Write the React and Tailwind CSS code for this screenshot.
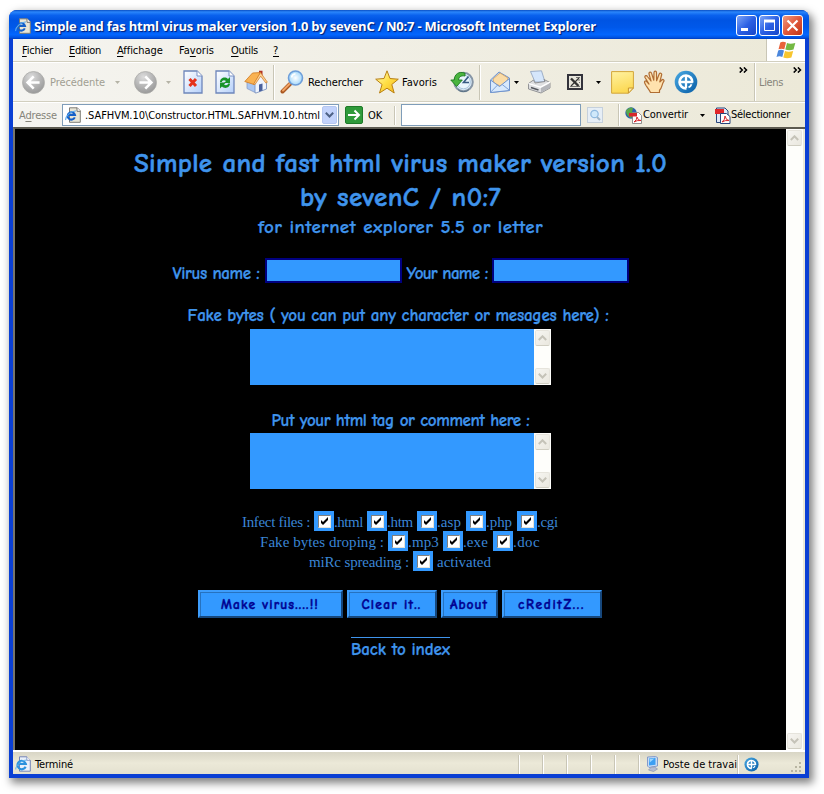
import { useLayoutEffect, useRef } from "react";

// Text run that tracks its letters so that it spans exactly `w` pixels.
function Fit({ w, className = "", children }) {
  const box = useRef(null);
  const run = useRef(null);
  useLayoutEffect(() => {
    const el = run.current;
    el.style.letterSpacing = "0px";
    const n = el.textContent.length;
    const gap = (w - el.getBoundingClientRect().width) / n;
    el.style.letterSpacing = gap + "px";
    box.current.style.width = w + "px";
  }, [w]);
  return (
    <span ref={box} className={"inline-block shrink-0 whitespace-pre " + className}>
      <span ref={run} className="inline-block">{children}</span>
    </span>
  );
}

const U = ({ children }) => <span className="underline underline-offset-2 decoration-1">{children}</span>;

const Caret = ({ className = "" }) => (
  <svg viewBox="0 0 5 3" className={"h-[3px] w-[5px] shrink-0 " + className} fill="currentColor"><path d="M0 0h5L2.5 3z" /></svg>
);

const Sep = ({ className = "" }) => <div className={"w-[2px] shrink-0 border-l border-[#c9c6b6] border-r border-r-white " + className} />;

const PageE = ({ className = "" }) => (
  <svg viewBox="0 0 16 16" className={"h-4 w-4 shrink-0 " + className}>
    <path d="M4.5.8h7.8l3 3v11.5H4.5z" fill="#e9e6d6" stroke="#7e7d77" />
    <path d="M12 .8v3.500h3.300" fill="#fff" stroke="#555" strokeWidth=".8" />
    <path d="M9.800 10.400A3.700 3.700 0 1 1 10 8H3.500" fill="none" stroke="#1560c8" strokeWidth="2" />
    <path d="M.8 13C0 10 6 3.500 11 4" fill="none" stroke="#57a8ee" strokeWidth="1.100" />
  </svg>
);

const NavCircle = ({ flip, className = "" }) => (
  <svg viewBox="0 0 22 22" className={"h-[23px] w-[23px] shrink-0 " + className}>
    <defs>
      <radialGradient id="nav" cx=".4" cy=".25" r=".8"><stop stopColor="#dcdcdc" /><stop offset=".5" stopColor="#b8b8b8" /><stop offset="1" stopColor="#969696" /></radialGradient>
    </defs>
    <circle cx="11" cy="11" r="10.500" fill="url(#nav)" stroke="#a8a8a6" strokeWidth=".7" />
    <g transform={flip ? "translate(22 0) scale(-1 1)" : undefined}>
      <path d="M11.200 5.200L5.400 11l5.800 5.800M5.800 11h11" fill="none" stroke="#fff" strokeWidth="2.500" />
    </g>
  </svg>
);

const Sheet = ({ children, className = "" }) => (
  <svg viewBox="0 0 20 24" className={"h-6 w-5 shrink-0 " + className}>
    <defs><linearGradient id="sheet" x2="1" y2="1"><stop stopColor="#fff" /><stop offset="1" stopColor="#b5d0fa" /></linearGradient></defs>
    <path d="M1 1h13l5 5v17H1z" fill="url(#sheet)" stroke="#6e86bb" strokeWidth="1.300" />
    <path d="M14 1v5h5" fill="#fff" stroke="#7d93c4" />
    {children}
  </svg>
);

const Home = ({ className = "" }) => (
  <svg viewBox="0 0 24 24" className={"h-6 w-6 shrink-0 " + className}>
    <path d="M15 .8h3.500V8L15 5z" fill="#b23325" />
    <path d="M3 11l9 1v11L3 18.500z" fill="#a9c6f2" stroke="#8297c0" strokeWidth=".7" />
    <path d="M11 22.500V12.500L17 4.500l5.500 7.500v7L12 23z" fill="#eff4fd" stroke="#7e94bf" strokeWidth=".9" />
    <path d="M15 14.500l3.500-1v7L15 21.700z" fill="#49609c" />
    <path d="M8.500 3L16.500 2.500 10 14.500.8 11.500z" fill="#f9b252" stroke="#cf7920" strokeWidth=".8" />
    <path d="M16.500 2.500l6.900 9.700-1.600.8-5.100-6.800-5.700 8.300-1.500-.3z" fill="#fdd194" stroke="#cf7920" strokeWidth=".7" />
  </svg>
);

const Search = ({ className = "" }) => (
  <svg viewBox="0 0 24 24" className={"h-6 w-6 shrink-0 " + className}>
    <defs><radialGradient id="lens"><stop stopColor="#fff" /><stop offset="1" stopColor="#a3d8fb" /></radialGradient></defs>
    <path d="M10 14l-7.500 7.500" stroke="#a95720" strokeWidth="4" strokeLinecap="round" />
    <path d="M9.500 14l-6.500 6.500" stroke="#f2a263" strokeWidth="2" strokeLinecap="round" />
    <circle cx="15.500" cy="8" r="7" fill="url(#lens)" stroke="#6e9ed9" strokeWidth="1.600" />
    <path d="M11.500 7.500a4.500 4.500 0 0 1 4-3.700" fill="none" stroke="#fff" strokeWidth="1.500" />
  </svg>
);

const Star = ({ className = "" }) => (
  <svg viewBox="0 0 24 24" className={"h-6 w-6 shrink-0 " + className}>
    <defs><linearGradient id="star" x2="1" y2="1"><stop stopColor="#fffbc0" /><stop offset=".5" stopColor="#ffdf45" /><stop offset="1" stopColor="#f5b319" /></linearGradient></defs>
    <path d="M12 .8l3 7.700 8.300.7-6.500 5.300 2.400 8.500L12 18.200 4.500 23l2.600-8.500L.7 9.200 9 8.500z" fill="url(#star)" stroke="#b98014" strokeLinejoin="round" />
  </svg>
);

const History = ({ className = "" }) => (
  <svg viewBox="0 0 24 24" className={"h-6 w-6 shrink-0 " + className}>
    <circle cx="13.500" cy="12" r="9.300" fill="#dcecf9" stroke="#8796a6" strokeWidth="2" />
    <circle cx="13.500" cy="12" r="6.800" fill="#e9f5fd" stroke="#abc5dc" />
    <path d="M18.500 6.500L13.500 12.500h5.500" fill="none" stroke="#375a83" strokeWidth="1.600" />
    <path d="M15 3.200C9 .8 4.500 4 4.200 10H.8l5.800 6.500 5.700-6.500H8.600c0-2.700 2-4.800 6.400-4z" fill="#4ab43e" stroke="#1d7b20" strokeWidth=".9" />
    <path d="M8 19.500c3 3 8 2.600 11 0" fill="none" stroke="#5b7285" strokeWidth="1" />
  </svg>
);

const Mail = ({ className = "" }) => (
  <svg viewBox="0 0 22 24" className={"h-6 w-[22px] shrink-0 " + className}>
    <path d="M1.500 10L10 2l10.500 6v12.500L1.500 22.500z" fill="#bcd7f9" stroke="#6f93cc" />
    <path d="M4 9l7-6 8 5-1.500 5L11 16l-6-3z" fill="#fbdca6" stroke="#d2a161" strokeWidth=".8" />
    <path d="M1.500 10l9 6.500 10-8v12l-19 2z" fill="#d8e9fd" stroke="#6f93cc" />
    <path d="M1.800 22l7-7.200M20.200 20l-7-5.500" stroke="#7da1d8" />
  </svg>
);

const Printer = ({ className = "" }) => (
  <svg viewBox="0 0 24 24" className={"h-6 w-6 shrink-0 " + className}>
    <path d="M3.500 1.500L14.500.8 18 12H8z" fill="#d5e6fb" stroke="#8d9fbd" strokeWidth=".8" />
    <path d="M1.500 13.500l5-3.500 1.500 3 10-1.500-1-2 6 3v5.500l-9 5-12.500-4z" fill="#dedfe1" stroke="#7d7f83" strokeWidth=".8" />
    <path d="M1.500 13.500l12 3.700 9.500-5" fill="none" stroke="#fff" strokeWidth="1.300" />
    <path d="M14 18v4.500l8.500-4.500v-4.500z" fill="#b4b6bb" />
    <path d="M4 17.500l7.500 2.500" stroke="#55585e" strokeWidth="1.400" />
  </svg>
);

const Excel = ({ className = "" }) => (
  <svg viewBox="0 0 16 16" className={"h-4 w-4 shrink-0 " + className}>
    <path d="M1 1h14v14H1z" fill="#e8e6dc" stroke="#33333b" strokeWidth="2" />
    <path d="M4 4.500l7.500 7.500" stroke="#333" strokeWidth="2.400" />
    <path d="M12 4L4 12" stroke="#333" strokeWidth="1.100" />
    <path d="M9 3.500h4M11 6h2M12 8.500h1M3 12.500h10" stroke="#555" strokeWidth=".8" />
  </svg>
);

const Note = ({ className = "" }) => (
  <svg viewBox="0 0 23 23" className={"h-[23px] w-[23px] shrink-0 " + className}>
    <defs><linearGradient id="note" y2="1" x2=".3"><stop stopColor="#fff2a2" /><stop offset="1" stopColor="#fcd954" /></linearGradient></defs>
    <path d="M.6.6h21.800V17l-5 5.200H.6z" fill="url(#note)" stroke="#d3a63a" />
    <path d="M17.400 22.200V17h5z" fill="#ffeeb0" stroke="#c79630" />
  </svg>
);

const Hand = ({ className = "" }) => (
  <svg viewBox="0 0 22 24" className={"h-6 w-[22px] shrink-0 " + className}>
    <path d="M7.500 22.500c-1-2.500-2.500-4-4.500-7C1.500 13 1 11.500 2.200 11c1.300-.4 2.300 1.500 3.800 3L2 7.500C1.400 5.600 3.600 4.800 4.400 6.500L8 11 6 4C5.600 2 8 1.300 8.600 3.400l2.200 6.800.2-7.700c.2-1.900 2.500-1.800 2.500.2l.1 8 2.600-6.700c.8-1.700 2.900-.8 2.400 1L16.800 12l2-2c1.300-1.200 2.900.2 1.800 1.700-2 2.800-1.400 6.300-4.100 8.500v2.300z" fill="#ffe2ae" stroke="#b06d33" strokeWidth="1.200" strokeLinejoin="round" />
  </svg>
);

const Target = ({ className = "h-6 w-6" }) => (
  <svg viewBox="0 0 24 24" className={"shrink-0 " + className}>
    <defs><linearGradient id="tgt" y2="1"><stop stopColor="#4aa9e2" /><stop offset="1" stopColor="#075da6" /></linearGradient></defs>
    <circle cx="12" cy="12" r="11.300" fill="url(#tgt)" />
    <path d="M18.300 12.500A6.400 6.400 0 1 0 12.500 18.300" fill="none" stroke="#fff" strokeWidth="2.600" />
    <path d="M12 6v12M6 12h12.800" stroke="#fff" strokeWidth="2.300" />
    <path d="M14.500 17.300q2.400-.8 3-3" fill="none" stroke="#fff" strokeWidth="1.800" />
  </svg>
);

const Chevrons = ({ className = "" }) => (
  <svg viewBox="0 0 9 6" className={"h-[6px] w-[9px] shrink-0 " + className} fill="none" stroke="#000" strokeWidth="1.500"><path d="M.7.4L3.300 3 .7 5.600M4.900.4L7.500 3 4.900 5.600" /></svg>
);

const Flag = () => (
  <svg viewBox="0 0 20 18" className="h-[18px] w-5">
    <path d="M4.300 1.500Q7 .2 10 1.600L8.300 8.300Q5.500 7 2.500 8.300z" fill="#e8623a" />
    <path d="M11 2Q14 3.600 19.300 2L17.500 8.600Q13 10 9.300 8.600z" fill="#74b943" />
    <path d="M2.200 9.500Q5 8.200 8 9.500L6.300 16Q3.500 14.700.5 16z" fill="#4a86dc" />
    <path d="M9 9.900Q12.500 11.400 17.200 9.900L15.400 16.400Q11 18 7.300 16.400z" fill="#f7c52e" />
  </svg>
);

const Pdf = ({ globe, className = "" }) => (
  <svg viewBox="0 0 17 17" className={"h-[17px] w-[17px] shrink-0 " + className}>
    {globe ? (
      <>
        <circle cx="6" cy="6" r="5.700" fill="#2b62ac" />
        <path d="M1 3.500Q5-1 8 1L7 5l3 2-4 4Q1 9 1 3.500z" fill="#5aa648" />
        <path d="M7.500 5.500h6l3 3v8h-9z" fill="#fff" stroke="#777" strokeWidth=".8" />
        <path d="M4 6h8v3.500H4z" fill="#d7282b" />
        <path d="M9 15q3-2 3-5 1 4 4 3.500-4-.5-7 1.500z" fill="none" stroke="#d7282b" />
      </>
    ) : (
      <>
        <path d="M2.500 1h8.500l3 3v11.500H2.500z" fill="#dfe8f6" stroke="#28467d" />
        <path d="M1 2h9v5H1z" fill="#e0262a" />
        <path d="M6.500 6.500h6l3.500 3v7H6.500z" fill="#fff" stroke="#28467d" />
        <path d="M8 15q3-2 3-6 1 4.500 4 4.500-4-.5-7 1.500z" fill="none" stroke="#d7282b" />
      </>
    )}
  </svg>
);

const StatusE = ({ className = "" }) => (
  <svg viewBox="0 0 16 16" className={"h-4 w-4 shrink-0 " + className}>
    <path d="M4.500.8h7.300l3.500 3.500v10.900H4.500z" fill="#eaf1fb" stroke="#7484b7" />
    <path d="M11.800.8v3.500h3.500" fill="#fff" stroke="#7484b7" strokeWidth=".8" />
    <path d="M10.600 10.700A4.200 4.200 0 1 1 10.800 8H3.500" fill="none" stroke="#2d92dd" strokeWidth="2.200" />
    <path d="M.8 13.500C0 10 7 3.500 11.700 4.200" fill="none" stroke="#5cb4f0" />
  </svg>
);

const Monitor = ({ className = "" }) => (
  <svg viewBox="0 0 14 16" className={"h-4 w-[14px] shrink-0 " + className}>
    <path d="M1.500 1l8-.5 2 1V10L3 11.500 1.500 10z" fill="#c8dcf5" stroke="#7b93c6" strokeWidth=".9" />
    <path d="M3 2.400l6.500-.6v7L3 9.600z" fill="#3d9ff2" />
    <path d="M3.500 3l5-.4-4.800 4z" fill="#9bd6ff" />
    <path d="M5.500 11h3l3 2-4 2.500-5-1.500z" fill="#b6bed2" stroke="#8b94ae" strokeWidth=".7" />
  </svg>
);

const ScrollBtn = ({ down }) => (
  <div className="flex h-[16px] w-full items-center justify-center rounded-[2px] border border-[#e6e4dc] border-b-[#d0cec2] bg-gradient-to-br from-[#f6f5f1] to-[#eae8df]">
    <svg viewBox="0 0 9 6" className="h-[6px] w-[9px]" fill="none" stroke="#c5c3b8" strokeWidth="2"><path d={down ? "M.8.8l3.700 3.700L8.200.8" : "M.8 5l3.700-3.700L8.200 5"} /></svg>
  </div>
);

const ScrollBar = () => (
  <div className="flex w-[17px] shrink-0 flex-col justify-between bg-[#fefefb] p-px">
    <ScrollBtn />
    <ScrollBtn down />
  </div>
);

const Area = ({ className = "" }) => (
  <div className={"flex h-[56px] w-[301px] bg-[#3399ff] " + className}>
    <div className="flex-1" />
    <ScrollBar />
  </div>
);

const Check = ({ className = "" }) => (
  <span className={"flex h-5 w-5 shrink-0 items-center justify-center bg-[#3399ff] " + className}>
    <span className="flex h-[13px] w-[13px] items-center justify-center border border-[#808080] border-r-[#e6e3d8] border-b-[#e6e3d8] bg-white">
      <svg viewBox="0 0 9 9" className="h-[9px] w-[9px]" fill="#000"><path d="M1 3v3l2 2 5-5V0L3 5z" /></svg>
    </span>
  </span>
);

const Btn = ({ w, className, children }) => (
  <div className={"flex h-7 items-center justify-center border-2 border-t-[#3d9dfc] border-l-[#3d9dfc] border-r-[#16477c] border-b-[#16477c] bg-[#3399ff] shadow-[inset_1px_1px_0_#2672bf] " + className}>
    <Fit w={w} className="mt-px text-[13.5px] font-bold leading-4 text-[#000090] [-webkit-text-stroke:0.4px_#000090]">{children}</Fit>
  </div>
);

const WinBtn = ({ red, children }) => (
  <div className={"flex h-[21px] w-[21px] items-center justify-center rounded-[3px] border border-white " + (red ? "bg-gradient-to-br from-[#f09a80] via-[#e0563a] to-[#bf3414]" : "bg-gradient-to-br from-[#7ea4f6] via-[#2c60e4] to-[#1845c8]")}>
    <svg viewBox="0 0 19 19" className="h-[19px] w-[19px]" fill="none" stroke="#fff">{children}</svg>
  </div>
);

const comic = "font-['Comic_Sans_MS','Comic_Neue',Lato,sans-serif] [-webkit-text-stroke:0.25px_currentColor]";

export default function App() {
  return (
    <div className="h-[794px] w-[824px] overflow-hidden bg-white pt-[10px] pl-[9px] font-['Tahoma','DejaVu_Sans_Condensed','Noto_Sans',sans-serif] text-[11px] leading-[14px] text-black">
      <div className="flex h-[768px] w-[800px] flex-col rounded-t-[8px] bg-[#0a3fd4] shadow-[3px_4px_9px_1px_rgba(0,0,0,0.5)]">
        <div className="flex h-[29px] shrink-0 items-center rounded-t-[8px] bg-[linear-gradient(180deg,#0a4fc4_0%,#2a86fb_7%,#0a62ee_18%,#0054e3_35%,#0058ea_60%,#0366fe_85%,#0055e5_94%,#003cc0_100%)] pt-[2px] pl-[6px]">
          <PageE />
          <Fit w={562} className="ml-[3px] font-['Trebuchet_MS','Open_Sans',sans-serif] text-[13px] font-bold leading-4 text-white [text-shadow:1px_1px_1px_#001a70]">Simple and fas html virus maker version 1.0 by sevenC / N0:7 - Microsoft Internet Explorer</Fit>
          <div className="ml-auto flex gap-[2px] pr-[6px]">
            <WinBtn><path d="M4 13.500h7" strokeWidth="3" /></WinBtn>
            <WinBtn><path d="M4.500 5.500h10v9h-10z" /><path d="M4 5h11" strokeWidth="3" /></WinBtn>
            <WinBtn red><path d="M4.500 4.500l10 10M14.500 4.500l-10 10" strokeWidth="2.200" /></WinBtn>
          </div>
        </div>

        <div className="mx-[4px] mb-[4px] flex min-h-0 flex-1 flex-col bg-[#ece9d8]">
          <div className="flex h-[23px] shrink-0 items-center border-b border-[#d2cfbf] bg-gradient-to-r from-[#f5f4f0] to-[#ece9d8] pl-[9px]">
            <Fit w={31} className="mt-px"><U>F</U>ichier</Fit>
            <Fit w={32} className="mt-px ml-[16px]"><U>E</U>dition</Fit>
            <Fit w={46} className="mt-px ml-[16px]"><U>A</U>ffichage</Fit>
            <Fit w={35} className="mt-px ml-[16px]">Fa<U>v</U>oris</Fit>
            <Fit w={27} className="mt-px ml-[17px]"><U>O</U>utils</Fit>
            <Fit w={6} className="mt-px ml-[15px]"><U>?</U></Fit>
            <div className="ml-auto flex h-[22px] w-[39px] items-center justify-center border-l border-[#c9c6b6] bg-white"><Flag /></div>
          </div>

          <div className="flex h-[40px] shrink-0 items-center border-t border-b border-t-white border-b-[#d2cfbf] bg-gradient-to-r from-[#f5f4f0] to-[#ece9d8] pl-[9px]">
            <NavCircle />
            <Fit w={55} className="mt-[2px] ml-[5px] text-[#a09e92]">Précédente</Fit>
            <Caret className="ml-[10px] text-[#b5b3a6]" />
            <NavCircle flip className="ml-[14px]" />
            <Caret className="ml-[9px] text-[#b5b3a6]" />
            <Sheet className="ml-[12px]"><path d="M6.500 9l6.500 7M13 9l-6.500 7" stroke="#e5331c" strokeWidth="3" /></Sheet>
            <Sheet className="ml-[12px]">
              <path d="M5 12c0-4 5-6 8-3l2-2v6H9l2-2c-2-1.500-4-.5-4 1z" fill="#189329" />
              <path d="M15 13.500c0 4-5 6-8 3l-2 2v-6h6l-2 2c2 1.500 4 .5 4-1z" fill="#189329" />
            </Sheet>
            <Home className="ml-[9px]" />
            <Sep className="ml-[5px] h-[35px]" />
            <Search className="ml-[5px]" />
            <Fit w={55} className="mt-[2px] ml-[4px]">Rechercher</Fit>
            <Star className="ml-[12px]" />
            <Fit w={35} className="mt-[2px] ml-[3px]">Favoris</Fit>
            <History className="ml-[13px]" />
            <Sep className="ml-[5px] h-[35px]" />
            <Mail className="ml-[8px]" />
            <Caret className="ml-[3px]" />
            <Printer className="ml-[8px]" />
            <Excel className="ml-[16px]" />
            <Caret className="ml-[13px]" />
            <Note className="ml-[10px]" />
            <Hand className="ml-[9px]" />
            <Target className="ml-[9px] h-[24px] w-[24px]" />
            <Chevrons className="-mt-[25px] ml-[41px]" />
            <Sep className="ml-[6px] h-[38px]" />
            <Fit w={24} className="mt-px ml-[3px] text-[#86847a]">Liens</Fit>
            <Chevrons className="-mt-[25px] ml-[10px]" />
          </div>

          <div className="flex h-[25px] shrink-0 items-center border-t border-white bg-gradient-to-r from-[#f5f4f0] to-[#ece9d8] pl-[6px]">
            <Fit w={38} className="mt-px text-[#86847a]">A<U>d</U>resse</Fit>
            <div className="ml-[5px] flex h-[22px] w-[277px] shrink-0 items-center border border-[#7f9db9] bg-white pl-[2px]">
              <PageE />
              <Fit w={235} className="mt-[2px] ml-[4px]">.SAFHVM.10\Constructor.HTML.SAFHVM.10.html</Fit>
              <div className="ml-[2px] flex h-[18px] w-[15px] items-center justify-center rounded-[2px] border border-[#b5c7f0] bg-[#c3d3fb]">
                <svg viewBox="0 0 9 6" className="h-[6px] w-[9px]" fill="none" stroke="#4d6185" strokeWidth="2"><path d="M.8.8l3.700 3.700L8.200.8" /></svg>
              </div>
            </div>
            <svg viewBox="0 0 18 18" className="ml-[6px] h-[18px] w-[18px] shrink-0">
              <rect x=".5" y=".5" width="17" height="17" rx="1.500" fill="#2f9a3a" stroke="#1e7a29" />
              <path d="M3 9h11M9.500 4.500L14 9l-4.500 4.500" fill="none" stroke="#fff" strokeWidth="2" />
            </svg>
            <Fit w={14} className="mt-px ml-[5px]">OK</Fit>
            <Sep className="ml-[12px] h-[19px]" />
            <div className="ml-[5px] h-[22px] w-[180px] shrink-0 border border-[#7f9db9] bg-white" />
            <div className="ml-[6px] flex h-4 w-4 shrink-0 items-center justify-center border border-[#c5d0dc] bg-[#e6eef6]">
              <svg viewBox="0 0 12 12" className="h-3 w-3" fill="none"><path d="M8 8l3 3" stroke="#9db4c8" strokeWidth="2" /><circle cx="5.500" cy="5" r="3.700" fill="#cfe8fa" stroke="#8fb9df" strokeWidth="1.200" /></svg>
            </div>
            <Sep className="ml-[15px] h-[22px]" />
            <Pdf globe className="ml-[5px]" />
            <Fit w={45} className="ml-px">Convertir</Fit>
            <Caret className="ml-[12px]" />
            <Pdf className="ml-[9px]" />
            <Fit w={59}>Sélectionner</Fit>
          </div>

          <div className="flex h-[623px] shrink-0 border-t-2 border-l-2 border-t-[#5c5a50] border-l-[#77756a] pr-[2px]">
            <div className="flex h-[621px] w-[771px] shrink-0 flex-col items-center bg-black pt-[17px] text-[#3f94ec]">
              <div className={"flex flex-col items-center font-semibold " + comic}>
                <div className="flex h-[34px] items-center"><Fit w={533} className="mt-[2px] text-[27px] leading-[34px] [-webkit-text-stroke:0.5px_currentColor]">Simple and fast html virus maker version 1.0</Fit></div>
                <div className="flex h-[35px] items-center"><Fit w={201} className="mt-px text-[27px] leading-[34px] [-webkit-text-stroke:0.5px_currentColor]">by sevenC / n0:7</Fit></div>
                <div className="flex h-[24px] items-center"><Fit w={285} className="text-[19px] leading-6">for internet explorer 5.5 or letter</Fit></div>
              </div>
              <div className={"mt-[19px] flex h-[25px] items-center font-semibold " + comic}>
                <Fit w={87} className="mt-[7px] text-[17px] leading-5">Virus name :</Fit>
                <div className="ml-[5px] h-[25px] w-[137px] border-2 border-[#000080] bg-[#3399ff]" />
                <Fit w={81} className="mt-[7px] ml-[5px] text-[17px] leading-5">Your name :</Fit>
                <div className="ml-[4px] h-[25px] w-[137px] border-2 border-[#000080] bg-[#3399ff]" />
              </div>
              <div className={"mt-[23px] flex h-5 items-center pr-[5px] font-semibold " + comic}><Fit w={421} className="text-[17px] leading-5">Fake bytes ( you can put any character or mesages here) :</Fit></div>
              <Area className="mt-[3px]" />
              <div className={"mt-[26px] flex h-5 items-center font-semibold " + comic}><Fit w={258} className="text-[17px] leading-5">Put your html tag or comment here :</Fit></div>
              <Area className="mt-[2px]" />

              <div className="mt-[22px] flex flex-col items-center pr-px font-['Times_New_Roman','Liberation_Serif',serif] text-[15px] leading-5 text-[#3b86d6]">
                <div className="flex h-5">
                  <Fit w={68} className="mt-px mr-[4px]">Infect files :</Fit>
                  <Check /><Fit w={29} className="mt-px mr-[4px]">.html</Fit>
                  <Check /><Fit w={26} className="mt-px mr-[4px]">.htm</Fit>
                  <Check /><Fit w={24} className="mt-px mr-[5px]">.asp</Fit>
                  <Check /><Fit w={26} className="mt-px mr-[5px]">.php</Fit>
                  <Check /><Fit w={21} className="mt-px">.cgi</Fit>
                </div>
                <div className="flex h-5">
                  <Fit w={124} className="mt-px mr-[4px]">Fake bytes droping :</Fit>
                  <Check /><Fit w={31} className="mt-px mr-[4px]">.mp3</Fit>
                  <Check /><Fit w={25} className="mt-px mr-[5px]">.exe</Fit>
                  <Check /><Fit w={27} className="mt-px">.doc</Fit>
                </div>
                <div className="flex h-5">
                  <Fit w={100} className="mt-px mr-[4px]">miRc spreading :</Fit>
                  <Check /><Fit w={54} className="mt-px ml-[4px]">activated</Fit>
                </div>
              </div>

              <div className={"mt-[19px] flex gap-[4px] pr-[2px] " + comic}>
                <Btn w={98} className="w-[145px]">Make virus....!!</Btn>
                <Btn w={60} className="w-[90px]">Clear it..</Btn>
                <Btn w={38} className="w-[57px]">About</Btn>
                <Btn w={67} className="w-[100px]">cReditZ...</Btn>
              </div>

              <div className={"mt-[19px] flex w-[99px] border-t border-[#3f94ec] pt-[2px] font-semibold " + comic}><Fit w={99} className="text-[17px] leading-5">Back to index</Fit></div>
            </div>
            <ScrollBar />
          </div>

          <div className="flex flex-1 items-center border-t-2 border-white bg-gradient-to-b from-[#d8d5c5] via-[#ece9d8] to-[#e4e1d0] pt-[2px] pl-[2px]">
            <StatusE />
            <Fit w={38} className="mt-[2px] ml-[4px]">Terminé</Fit>
            <div className="ml-auto flex h-[19px] items-center pr-[2px]">
              <Sep className="mr-[22px] h-[19px]" />
              <Sep className="mr-[22px] h-[19px]" />
              <Sep className="mr-[22px] h-[19px]" />
              <Sep className="mr-[22px] h-[19px]" />
              <Sep className="mr-[22px] h-[19px]" />
              <Sep className="h-[19px]" />
              <Monitor className="ml-[6px]" />
              <Fit w={74} className="mt-[2px] ml-[3px]">Poste de travai</Fit>
              <Sep className="h-[19px]" />
              <Target className="ml-[5px] h-[15px] w-[15px]" />
              <svg viewBox="0 0 12 12" className="mt-[8px] ml-[32px] h-3 w-3" fill="#b8b5a2"><path d="M8 0h2v2H8zM4 4h2v2H4zM8 4h2v2H8zM0 8h2v2H0zM4 8h2v2H4zM8 8h2v2H8z" /></svg>
            </div>
          </div>
        </div>
      </div>
    </div>
  );
}
